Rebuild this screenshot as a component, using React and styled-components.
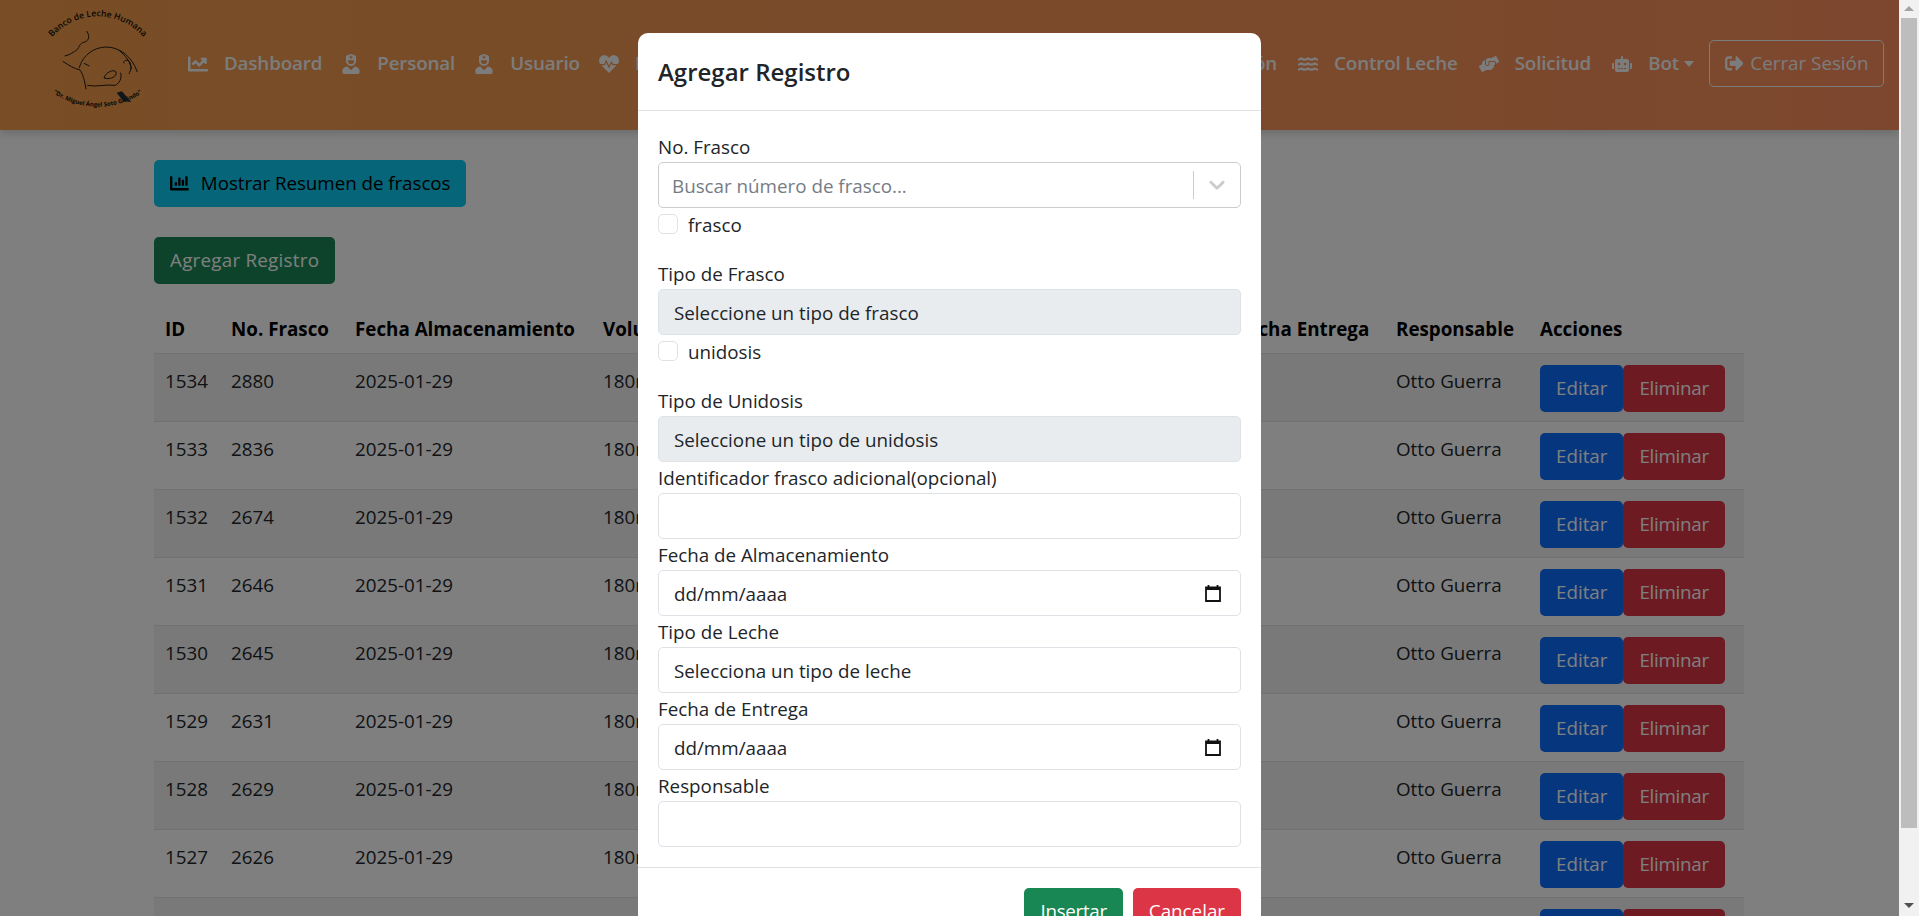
import React from 'react';
import styled, { createGlobalStyle } from 'styled-components';
import { FaChartLine, FaUserNurse, FaHeartbeat, FaWater, FaHandsHelping, FaRobot, FaSignOutAlt, FaChartBar } from 'react-icons/fa';

const GlobalStyle = createGlobalStyle`
    html, body {
        margin: 0;
        height: 100%;
        overflow: hidden;
        background: #fff;
    }
    body {
        font-family: "Open Sans", "Noto Sans", sans-serif;
        font-size: 18.8px;
        line-height: 29px;
        color: #212529;
    }
    * { box-sizing: border-box; }
`;

const Page = styled.div`
    width: 1899px;
    height: 916px;
    overflow: hidden;
`;

const Header = styled.header`
    height: 130px;
    padding: 0 15px 0 30px;
    display: flex;
    align-items: center;
    background: linear-gradient(to right, #f09c4c, #fa8f5e);
    box-shadow: 0 4px 8px rgba(0, 0, 0, 0.15);
`;

const Logo = styled.svg`
    width: 140px;
    height: 125px;
    flex: none;
    align-self: flex-start;
    margin-right: 18px;
`;

const NavGroup = styled.nav`
    display: flex;
    align-items: center;
    gap: 19px;
    margin-top: -3px;
    white-space: nowrap;
`;

const RightGroup = styled(NavGroup)`
    margin-left: auto;
    gap: 21px;
`;

const NavLink = styled.a`
    display: flex;
    align-items: center;
    gap: 16px;
    font-weight: 600;
    letter-spacing: -0.15px;
    color: #f8f9fa;
    svg { width: 20px; height: 20px; flex: none; }
`;

const Caret = styled.span`
    width: 0;
    height: 0;
    margin-left: -16px;
    border-top: 6px solid #f8f9fa;
    border-left: 5px solid transparent;
    border-right: 5px solid transparent;
`;

const LogoutButton = styled.button`
    height: 47px;
    width: 175px;
    margin-left: -6px;
    display: flex;
    align-items: center;
    justify-content: center;
    gap: 7px;
    font: inherit;
    color: #f8f9fa;
    background: transparent;
    border: 1px solid #f8f9fa;
    border-radius: 5px;
`;

const Main = styled.main`
    padding: 30px 0 0 154px;
`;

const Button = styled.button`
    height: 47px;
    padding: 0 16px;
    display: inline-flex;
    align-items: center;
    gap: 12px;
    flex: none;
    font: inherit;
    letter-spacing: ${p => p.$track || 0}px;
    color: ${p => p.$text || '#fff'};
    background: ${p => p.$bg};
    border: none;
    border-radius: 5px;
`;

const ButtonStack = styled.div`
    display: flex;
    flex-direction: column;
    align-items: flex-start;
    gap: 30px;
    margin-bottom: 29px;
`;

const Table = styled.table`
    width: 1590px;
    table-layout: fixed;
    border-collapse: collapse;
`;

const Th = styled.th`
    width: ${p => p.$w}px;
    height: 40px;
    padding: 2px 11px 0;
    vertical-align: top;
    text-align: left;
    font-weight: 700;
    white-space: nowrap;
    color: #000;
`;

const Row = styled.tr`
    height: 68px;
    border-top: 1px solid #dee2e6;
    background: ${p => (p.$odd ? '#f2f2f2' : '#fff')};
`;

const Td = styled.td`
    padding: 11px 11px 0;
    vertical-align: top;
    line-height: 32px;
    white-space: nowrap;
    overflow: hidden;
`;

const Actions = styled.div`
    display: flex;
`;

const Backdrop = styled.div`
    position: fixed;
    inset: 0;
    right: 20px;
    background: rgba(0, 0, 0, 0.5);
    overflow: hidden;
`;

const Modal = styled.section`
    width: 623px;
    margin: 33px auto 0;
    background: #fff;
    border-radius: 10px;
`;

const ModalHeader = styled.div`
    height: 78px;
    padding: 2px 20px 0;
    display: flex;
    align-items: center;
    border-bottom: 1px solid #dee2e6;
`;

const ModalTitle = styled.h5`
    margin: 0;
    font-size: 24px;
    font-weight: 600;
    line-height: 1.2;
`;

const ModalBody = styled.div`
    padding: 20px 20px 20px;
`;

const Label = styled.label`
    display: block;
    height: 31px;
    padding-top: 2px;
`;

const Control = styled.div`
    height: 46px;
    padding: 2px 15px 0;
    display: flex;
    align-items: center;
    justify-content: space-between;
    background: ${p => (p.$disabled ? '#e9ecef' : '#fff')};
    border: 1px solid #dee2e6;
    border-radius: 5px;
`;

const SearchSelect = styled(Control)`
    padding: 2px 0 0 13px;
    border-color: #ccc;
    color: #757c85;
`;

const Indicators = styled.div`
    height: 28px;
    display: flex;
    align-items: center;
    border-left: 1px solid #ccc;
    padding: 0 10px;
    margin-bottom: 2px;
`;

const CheckRow = styled.label`
    height: 50px;
    padding-top: 3px;
    display: flex;
    align-items: flex-start;
    gap: 10px;
`;

const CheckBox = styled.span`
    width: 20px;
    height: 20px;
    margin-top: 3px;
    background: #fff;
    border: 1px solid #dee2e6;
    border-radius: 5px;
`;

const ModalFooter = styled.div`
    padding: 20px 20px 14px;
    display: flex;
    justify-content: flex-end;
    gap: 10px;
    border-top: 1px solid #dee2e6;
`;

const Scrollbar = styled.div`
    position: fixed;
    top: 0;
    right: 0;
    bottom: 0;
    width: 20px;
    padding: 18px 2px 88px;
    background: #f1f1f1;
`;

const ScrollThumb = styled.div`
    height: 100%;
    background: #bdbdbd;
`;

const ScrollArrow = styled.span`
    position: absolute;
    left: 5px;
    width: 0;
    height: 0;
    border-left: 5px solid transparent;
    border-right: 5px solid transparent;
    ${p => (p.$down
        ? 'bottom: 8px; border-top: 5px solid #505050;'
        : 'top: 6px; border-bottom: 5px solid #a3a3a3;')}
`;

const CalendarSvg = styled.svg`
    width: 16px;
    height: 18px;
    margin: 0 4px 2px 0;
`;

const CalendarIcon = () => (
    <CalendarSvg viewBox="0 0 16 18">
        <path d="M1 3.5h14v13.5H1z" fill="none" stroke="#111" strokeWidth="1.8" />
        <path d="M3.5 1v3M12.5 1v3" stroke="#111" strokeWidth="1.8" />
        <path d="M1 3h14v3H1z" fill="#111" />
    </CalendarSvg>
);

const Chevron = () => (
    <svg width="26" height="26" viewBox="0 0 20 20" fill="#ccc">
        <path d="M4.5 7.1c.5-.4 1.1-.4 1.6 0L10 10.9l3.9-3.8c.5-.4 1.1-.4 1.6 0 .4.4.4 1.1 0 1.5l-4.7 4.6c-.5.4-1.1.4-1.6 0L4.5 8.6c-.4-.4-.4-1.1 0-1.5z" />
    </svg>
);

const BankLogo = () => (
    <Logo viewBox="0 0 420 375">
        <defs>
            <path id="arcTop" d="M62 116 A182 182 0 0 1 344 116" />
            <path id="arcBottom" d="M60 272 A237 237 0 0 0 346 272" />
        </defs>
        <text fontFamily="Open Sans" fontSize="26" fontWeight="600" fill="#120d07">
            <textPath href="#arcTop" startOffset="50%" textAnchor="middle">Banco de Leche Humana</textPath>
        </text>
        <text fontFamily="Open Sans" fontSize="18" fontWeight="700" fill="#120d07">
            <textPath href="#arcBottom" startOffset="50%" textAnchor="middle">“Dr. Miguel Ángel Soto Galindo”</textPath>
        </text>
        <g fill="none" stroke="#221a12" strokeWidth="3">
            <path d="M170 93 C182 112 176 124 158 128 C146 132 150 146 134 154 C122 162 114 166 104 168" />
            <path d="M98 184 C118 196 132 206 150 210 C158 222 164 240 168 268" />
            <path d="M148 204 C156 168 194 136 240 142 C272 146 306 170 322 216" />
            <path d="M266 150 C286 166 302 186 304 208" />
            <path d="M282 190 C278 180 296 176 300 188 C304 198 304 210 296 222" />
            <path d="M172 256 C200 262 226 252 256 256 C268 250 276 236 272 218" />
            <path d="M222 234 C226 218 250 206 258 216 C262 228 244 240 222 234z" />
            <path d="M162 190 L178 198" />
        </g>
        <path d="M260 278 L276 274 L296 298 L304 306 L280 304z" fill="#1f2a33" />
    </Logo>
);

const columns = [
    ['ID', 66], ['No. Frasco', 124], ['Fecha Almacenamiento', 248], ['Volumen', 130],
    ['Tipo de Frasco', 240], ['Tipo de Leche', 264], ['Fecha Entrega', 159],
    ['Responsable', 144], ['Acciones', 215],
];

const rows = [
    [1534, 2880], [1533, 2836], [1532, 2674], [1531, 2646], [1530, 2645],
    [1529, 2631], [1528, 2629], [1527, 2626], [1526, 2625],
];

export default function App () {
    return (
        <>
            <GlobalStyle />
            <Page>
                <Header>
                    <BankLogo />
                    <NavGroup>
                        <NavLink><FaChartLine /> Dashboard</NavLink>
                        <NavLink><FaUserNurse /> Personal</NavLink>
                        <NavLink><FaUserNurse /> Usuario</NavLink>
                        <NavLink><FaHeartbeat /> Donadoras</NavLink>
                    </NavGroup>
                    <RightGroup>
                        <NavLink>Pasteurización</NavLink>
                        <NavLink><FaWater /> Control Leche</NavLink>
                        <NavLink><FaHandsHelping /> Solicitud</NavLink>
                        <NavLink><FaRobot /> Bot</NavLink>
                        <Caret />
                        <LogoutButton><FaSignOutAlt /> Cerrar Sesión</LogoutButton>
                    </RightGroup>
                </Header>
                <Main>
                    <ButtonStack>
                        <Button $bg="#0dcaf0" $text="#000" $track={-0.05}><FaChartBar /> Mostrar Resumen de frascos</Button>
                        <Button $bg="#198754" $track={0.25}>Agregar Registro</Button>
                    </ButtonStack>
                    <Table>
                        <thead>
                            <tr>{columns.map(([name, w]) => <Th key={name} $w={w}>{name}</Th>)}</tr>
                        </thead>
                        <tbody>
                            {rows.map(([id, frasco], i) => (
                                <Row key={id} $odd={i % 2 === 0}>
                                    <Td>{id}</Td>
                                    <Td>{frasco}</Td>
                                    <Td>2025-01-29</Td>
                                    <Td>180ml</Td>
                                    <Td />
                                    <Td />
                                    <Td />
                                    <Td>Otto Guerra</Td>
                                    <Td>
                                        <Actions>
                                            <Button $bg="#0d6efd">Editar</Button>
                                            <Button $bg="#dc3545" $track={-0.3}>Eliminar</Button>
                                        </Actions>
                                    </Td>
                                </Row>
                            ))}
                        </tbody>
                    </Table>
                </Main>
            </Page>
            <Backdrop>
                <Modal>
                    <ModalHeader><ModalTitle>Agregar Registro</ModalTitle></ModalHeader>
                    <ModalBody>
                        <Label>No. Frasco</Label>
                        <SearchSelect>
                            Buscar número de frasco...
                            <Indicators><Chevron /></Indicators>
                        </SearchSelect>
                        <CheckRow><CheckBox /> frasco</CheckRow>
                        <Label>Tipo de Frasco</Label>
                        <Control $disabled>Seleccione un tipo de frasco</Control>
                        <CheckRow><CheckBox /> unidosis</CheckRow>
                        <Label>Tipo de Unidosis</Label>
                        <Control $disabled>Seleccione un tipo de unidosis</Control>
                        <Label>Identificador frasco adicional(opcional)</Label>
                        <Control />
                        <Label>Fecha de Almacenamiento</Label>
                        <Control>dd/mm/aaaa <CalendarIcon /></Control>
                        <Label>Tipo de Leche</Label>
                        <Control>Selecciona un tipo de leche</Control>
                        <Label>Fecha de Entrega</Label>
                        <Control>dd/mm/aaaa <CalendarIcon /></Control>
                        <Label>Responsable</Label>
                        <Control />
                    </ModalBody>
                    <ModalFooter>
                        <Button $bg="#198754" $track={-0.3}>Insertar</Button>
                        <Button $bg="#dc3545">Cancelar</Button>
                    </ModalFooter>
                </Modal>
            </Backdrop>
            <Scrollbar>
                <ScrollArrow />
                <ScrollThumb />
                <ScrollArrow $down />
            </Scrollbar>
        </>
    );
}
